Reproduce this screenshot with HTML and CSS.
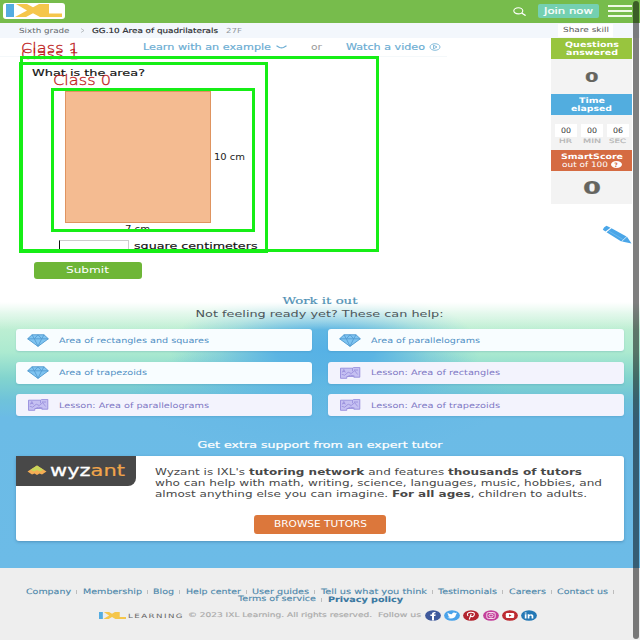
FILE: index.html
```html
<!DOCTYPE html>
<html lang="en">
<head>
<meta charset="utf-8">
<title>IXL | Area of quadrilaterals</title>
<link rel="stylesheet" href="styles.css">
</head>
<body>
<svg class="defs" width="0" height="0">
  <symbol id="gem" viewBox="0 0 22 13"><path d="M5 .8h12l4.300 4L11 12.400.7 4.800z" fill="#7fc4f1" stroke="#559dd2" stroke-width="1"/><path d="M.7 4.800h20.600M5 .8l2.300 4L11 .8l3.700 4L17 .8M7.300 4.800 11 12.200l3.700-7.400" fill="none" stroke="#559dd2" stroke-width=".9"/></symbol>
  <symbol id="lesson" viewBox="0 0 21 12"><path d="M1 1.200h12l1-.8h6.300v9.800h-6v-.8l-7 .1v1.800H1z" fill="#c5c0f2" stroke="#958cdb" stroke-width=".9"/><path d="m2.800 5.500 1.500-3 1.500 3M3.300 4.500h2M2.200 7.300l3 .9 3.500-3 3 1.300 3.500-2.800 3 3.800M13 1.200v3M8 9.500l3-1.300 4 .8M14.500 3h4" fill="none" stroke="#958cdb" stroke-width=".8"/></symbol>
  <symbol id="ixl" viewBox="0 0 56 13"><path d="M0 0h8v13H0z" fill="#54ace1"/><path d="M10 0h11l6 3.300L33 0h10v9.500h13V13H34l-7-3.700L20 13H9l12-6.500z" fill="#f5c64b"/></symbol>
</svg>
<div class="page">
  <header class="top">
    <div class="logo"><svg width="56" height="13"><use href="#ixl"/></svg></div>
    <div class="topright">
      <svg class="search" width="13" height="9" viewBox="0 0 13 9"><ellipse cx="5.300" cy="3.800" rx="4.500" ry="3.100" fill="none" stroke="#fff" stroke-width="1.100"/><path d="m8.600 6 4 2.500" stroke="#fff" stroke-width="1.400"/></svg>
      <a class="join"><span data-w="49">Join now</span></a>
      <div class="burger"><i></i><i></i><i></i></div>
    </div>
  </header>
  <nav class="crumbs">
    <span data-w="50.5">Sixth grade</span>
    <svg class="sep" width="5" height="5" viewBox="0 0 5 5"><path d="m1 .5 3 2-3 2" fill="none" stroke="#a4a9ac" stroke-width=".7"/></svg>
    <span class="skill" data-w="126">GG.10 Area of quadrilaterals</span>
    <span class="code" data-w="16">27F</span>
    <div class="share"><span data-w="46">Share skill</span></div>
  </nav>
  <main class="practice">
    <section class="question">
      <div class="help">
        <span data-w="128">Learn with an example</span>
        <svg class="chev" width="11" height="4" viewBox="0 0 11 4"><path d="m.5.8 3 1.700q2 .8 4 0l3-1.700" fill="none" stroke="#69acd2" stroke-width="1.200"/></svg>
        <span class="or" data-w="11">or</span>
        <span data-w="79">Watch a video</span>
        <svg class="play" width="12" height="8" viewBox="0 0 12 8"><ellipse cx="6" cy="4" rx="5" ry="3.300" fill="none" stroke="#69acd2" stroke-width=".8"/><path d="M4.500 2.200 8 4 4.500 5.800z" fill="none" stroke="#69acd2" stroke-width=".8"/></svg>
      </div>
      <h1><span data-w="113">What is the area?</span></h1>
      <div class="figure"><div class="shape"></div><span data-w="31">10 cm</span></div>
      <div class="base"><span data-w="25">7 cm</span></div>
      <div class="answer"><div class="field"></div><span data-w="123.5">square centimeters</span></div>
      <button class="submit"><span data-w="43">Submit</span></button>
    </section>
    <aside class="score">
      <div class="head green"><span data-w="54">Questions</span><span data-w="52">answered</span></div>
      <div class="box count"><span data-w="13.5">0</span></div>
      <div class="head blue"><span data-w="26">Time</span><span data-w="41">elapsed</span></div>
      <div class="box timer">
        <div><b><span data-w="10">00</span></b><small><span data-w="13">HR</span></small></div>
        <div><b><span data-w="10">00</span></b><small><span data-w="18">MIN</span></small></div>
        <div><b><span data-w="10">06</span></b><small><span data-w="17">SEC</span></small></div>
      </div>
      <div class="head orange"><span data-w="62">SmartScore</span><div class="outof"><span data-w="46">out of 100</span><em>?</em></div></div>
      <div class="box smart"><span data-w="18">0</span></div>
      <svg class="pencil" width="30" height="21" viewBox="0 0 30 21"><path d="M2 2.500 4.500.8 8.500 2.800 3.500 6.500.8 4.700z" fill="#4aa6e8"/><path d="m9.500 3.200 15 8.300-5.200 5L4.500 7.200z" fill="#4aa6e8"/><path d="m25 11.800 4.500 6.700-9.500-2z" fill="#4aa6e8"/><path d="m7 6.200 14 8.300" stroke="#81c4f1" stroke-width=".6"/></svg>
    </aside>
  </main>
  <section class="workout">
    <h2><span data-w="75">Work it out</span></h2>
    <h3><span data-w="248">Not feeling ready yet? These can help:</span></h3>
    <div class="cards">
      <a class="card"><svg width="22" height="13"><use href="#gem"/></svg><span data-w="150">Area of rectangles and squares</span></a>
      <a class="card"><svg width="22" height="13"><use href="#gem"/></svg><span data-w="109">Area of parallelograms</span></a>
      <a class="card"><svg width="22" height="13"><use href="#gem"/></svg><span data-w="88">Area of trapezoids</span></a>
      <a class="card lesson"><svg width="22" height="12"><use href="#lesson"/></svg><span data-w="129">Lesson: Area of rectangles</span></a>
      <a class="card lesson"><svg width="22" height="12"><use href="#lesson"/></svg><span data-w="150">Lesson: Area of parallelograms</span></a>
      <a class="card lesson"><svg width="22" height="12"><use href="#lesson"/></svg><span data-w="129">Lesson: Area of trapezoids</span></a>
    </div>
    <h4><span data-w="245">Get extra support from an expert tutor</span></h4>
    <div class="tutor">
      <div class="brand"><svg width="20" height="12" viewBox="0 0 20 12"><path d="M10 .5 19.500 6.500 15 9.500 12.500 8.500 10 10 7.500 8.500 5 9.500.5 6.500z" fill="#f5ae55"/><path d="m10 .5 6.500 4.200-3.500 1.800-3-1.500-3 1.500-3.500-1.800z" fill="#c9d65a"/></svg><span data-w="75">wyz<i>ant</i></span></div>
      <div class="pitch">
        <p><span data-w="427">Wyzant is IXL's <b>tutoring network</b> and features <b>thousands of tutors</b></span></p>
        <p><span data-w="447">who can help with math, writing, science, languages, music, hobbies, and</span></p>
        <p><span data-w="432">almost anything else you can imagine. <b>For all ages</b>, children to adults.</span></p>
      </div>
      <button class="browse"><span data-w="93">BROWSE TUTORS</span></button>
    </div>
  </section>
  <footer class="foot">
    <div class="links"><a><span data-w="45">Company</span></a><a><span data-w="59">Membership</span></a><a><span data-w="21">Blog</span></a><a><span data-w="55">Help center</span></a><a><span data-w="57">User guides</span></a><a><span data-w="106">Tell us what you think</span></a><a><span data-w="59">Testimonials</span></a><a><span data-w="37">Careers</span></a><a><span data-w="51">Contact us</span></a></div>
    <div class="links second"><a><span data-w="78">Terms of service</span></a><strong><span data-w="75">Privacy policy</span></strong></div>
    <div class="legal">
      <svg width="27" height="7" viewBox="0 0 56 13" preserveAspectRatio="none"><use href="#ixl" width="56" height="13"/></svg>
      <span class="learning" data-w="56">LEARNING</span>
      <span class="copy" data-w="184">© 2023 IXL Learning. All rights reserved.</span>
      <span class="follow" data-w="43">Follow us</span>
      <div class="social">
        <svg viewBox="0 0 16 11"><ellipse cx="8" cy="5.500" rx="7.900" ry="5.300" fill="#3f5a9c"/><path d="M7 10.500V6H5.400V4.500H7V3.600q0-2 3.500-1.600v1.300Q9 3.100 9 3.900v.6h1.700L10.400 6H9v4.500z" fill="#fff"/></svg>
        <svg viewBox="0 0 16 11"><ellipse cx="8" cy="5.500" rx="7.900" ry="5.300" fill="#4aa3ea"/><path d="M3.600 2.800q2 1.500 4.400 1.500.2-2 2-1.900 1 0 1.500.6l1.500-.3-.8.9.8.1-1 .8Q11.500 8.500 6.800 8.600q-2 0-3.400-.8 1.800 0 2.600-.7-1.300-.1-1.700-1h.8Q3.700 5.700 3.700 4.700l.7.1q-1.200-.8-.8-2z" fill="#fff"/></svg>
        <svg viewBox="0 0 16 11"><ellipse cx="8" cy="5.500" rx="7.900" ry="5.300" fill="#b3242f"/><path d="M6.200 9.500 8.200 4M5 6Q3 3 7.500 2.200 12 2 11.300 4.700 10.300 7.500 7.600 6.300" fill="none" stroke="#fff" stroke-width="1.100"/></svg>
        <svg viewBox="0 0 16 11"><ellipse cx="8" cy="5.500" rx="7.900" ry="5.300" fill="#c43f9b"/><rect x="3.800" y="2.500" width="8.400" height="6" rx="1.600" fill="none" stroke="#fff" stroke-width=".8"/><ellipse cx="8" cy="5.500" rx="2.100" ry="1.500" fill="none" stroke="#fff" stroke-width=".8"/><circle cx="10.600" cy="3.700" r=".4" fill="#fff"/></svg>
        <svg viewBox="0 0 16 11"><ellipse cx="8" cy="5.500" rx="7.900" ry="5.300" fill="#bd2b31"/><rect x="3.800" y="3" width="8.400" height="5" rx="1.300" fill="#fff"/><path d="m7 4.300 2.600 1.200L7 6.700z" fill="#bd2b31"/></svg>
        <svg viewBox="0 0 16 11"><ellipse cx="8" cy="5.500" rx="7.900" ry="5.300" fill="#2478b5"/><path d="M3.800 4.300h1.700v4.200H3.800zM3.800 2.500h1.700v1.100H3.800zM6.700 4.300h1.600v.5q2.800-1.200 4 .7v3h-1.700V6.200q-.8-1.200-2.200 0v2.300H6.700z" fill="#fff"/></svg>
      </div>
    </div>
  </footer>
  <div class="tag t1"><span data-w="58">Class 1</span></div>
  <div class="tag t2"><span data-w="58">Class 1</span></div>
  <div class="tag t3"><span data-w="58">Class 0</span></div>
  <div class="bound b1"></div>
  <div class="bound b2"></div>
  <div class="bound b3"></div>
  <div class="scrollbar"></div>
</div>
<script src="fit.js"></script>
</body>
</html>
```
FILE: styles.css
```css
* { box-sizing: border-box; }
body { margin: 0; background: #fff; font-family: "DejaVu Sans", sans-serif; font-size: 8px; color: #222; }
.defs { position: absolute; }
.page { position: relative; width: 640px; height: 640px; overflow: hidden; display: flex; flex-direction: column; }
svg { display: block; flex: none; }
h1, h2, h3, h4, p { margin: 0; font-weight: normal; }
button { border: 0; padding: 0; font-family: inherit; }
[data-w] { display: inline-block; white-space: nowrap; text-align: left; transform-origin: 0 50%; flex: none; }

.top { height: 23px; flex: none; background: #77bc4c; display: flex; justify-content: space-between; }
.logo { width: 62px; height: 16px; margin: 3px 0 0 3px; background: #fff; border-radius: 3px; padding: 1px 3px; }
.topright { display: flex; align-items: flex-start; padding-right: 8px; }
.search { margin: 7px 12px 0 0; }
.join { width: 61px; height: 14px; margin: 4px 9px 0 0; background: #74d0b1; color: #fff; border-radius: 2px; font-size: 9px; line-height: 15px; padding-left: 6px; -webkit-text-stroke: .2px #fff; }
.burger { width: 24px; padding-top: 5px; display: flex; flex-direction: column; gap: 3px; }
.burger i { height: 2px; background: #effae6; }

.crumbs { height: 15px; flex: none; background: #f3f7fc; display: flex; align-items: center; padding-left: 18.5px; font-size: 7px; color: #62676b; }
.sep { margin: 0 7px 0 11px; }
.skill { color: #26292c; -webkit-text-stroke: .15px #26292c; }
.code { padding-left: 0; color: #92989c; }
.share { margin-left: 316px; width: 55px; height: 13px; background: #fff; padding-left: 5px; line-height: 13px; color: #555; }
.code { margin-left: 8px; }

.practice { height: 252px; flex: none; display: flex; justify-content: space-between; }
.question { width: 400px; }
.help { display: flex; align-items: center; height: 19px; width: 447px; padding-left: 143px; font-size: 8.5px; color: #69acd2; border-bottom: 1px solid #f4f8fa; -webkit-text-stroke: .15px #69acd2; }
.chev { margin: 0 24px 0 5px; }
.or { color: #999; -webkit-text-stroke: 0; }
.play { margin-left: 4px; }
h1 { padding: 9px 0 0 32px; font-size: 9px; line-height: 14px; color: #111; height: 33.5px; -webkit-text-stroke: .15px #111; }
.figure { display: flex; align-items: center; gap: 3px; padding-left: 65px; color: #222; font-size: 8.5px; }
.shape { width: 146px; height: 132px; background: #f4bb91; border: 1px solid #df9460; }
.base { padding-left: 125px; font-size: 8.5px; line-height: 12px; height: 17px; }
.answer { display: flex; padding-left: 59px; font-size: 9px; line-height: 13px; height: 22.5px; color: #111; -webkit-text-stroke: .15px #111; }
.field { width: 70px; height: 11px; margin-right: 4.5px; border: 1px solid #ccc; border-left-color: #111; }
.submit { display: block; margin: 0 0 0 33.5px; width: 108px; height: 17px; border-radius: 3px; background: #6eb637; color: #fff; font-size: 9px; line-height: 17px; }

.score { width: 81px; margin-right: 8px; display: flex; flex-direction: column; align-items: stretch; }
.head { height: 21px; display: flex; flex-direction: column; align-items: center; justify-content: center; color: #fff; font-size: 7.5px; font-weight: bold; line-height: 7.5px; }
.green { background: #98c53e; }
.blue { background: #52addf; }
.orange { background: #d56b42; }
.outof { display: flex; align-items: center; gap: 3px; font-weight: normal; }
.outof em { width: 11px; height: 7px; border-radius: 50%; background: #fff; color: #d56b42; font: bold 6px/7px "DejaVu Sans", sans-serif; text-align: center; }
.box { background: #f3f3f3; display: flex; justify-content: center; color: #65655f; font-weight: bold; }
.count { height: 35px; align-items: center; font-size: 14px; -webkit-text-stroke: .2px #65655f; }
.smart { height: 33px; align-items: center; font-size: 18px; -webkit-text-stroke: .2px #65655f; }
.timer { height: 35px; padding-top: 9px; gap: 4px; font-weight: normal; }
.timer div { width: 22px; text-align: center; }
.timer b { display: block; height: 13px; background: #fff; font-weight: normal; font-size: 7.5px; line-height: 13px; color: #333; }
.timer small { display: block; color: #b4b4b4; font-size: 6px; line-height: 8px; -webkit-text-stroke: .15px #b4b4b4; }
.pencil { margin: 21px 0 0 51px; }

.workout { height: 278px; flex: none; display: flex; flex-direction: column; align-items: center; padding-top: 3px;
  background:
    linear-gradient(#fff 0, #fff 12px, rgba(255,255,255,.5) 23px, rgba(255,255,255,0) 40px),
    radial-gradient(ellipse 155px 64px at 325px 60px, #56b1e5 0, rgba(86,177,229,.9) 32%, rgba(90,180,228,.35) 68%, rgba(108,187,230,0) 100%),
    radial-gradient(ellipse 190px 60px at 320px 105px, rgba(99,183,230,.75) 20%, rgba(99,183,230,0) 100%),
    linear-gradient(#dcf6e7 0, #bfefd3 35px, #acead0 62px, #82d4ce 88px, #6fc3da 110px, #6bbbe6 128px, #6cbbe7 100%); }
h2 { font-family: "DejaVu Serif", serif; font-size: 10px; line-height: 15px; color: #4f91b5; transform: translateX(-.5px); -webkit-text-stroke: .2px #4f91b5; }
h3 { font-size: 9.5px; line-height: 12px; color: #4c565a; transform: translateX(-.5px); }
.cards { display: grid; grid-template-columns: 296px 296px; grid-auto-rows: 22px; gap: 10.5px 16px; margin-top: 9px; }
.card { background: #f8fdff; border-radius: 3px; display: flex; align-items: center; gap: 10px; padding-left: 11px; font-size: 7.5px; color: #4f8fc4; box-shadow: 0 1px 2px rgba(40,110,150,.2); }
.lesson { background: #f3f3fd; color: #7e77c4; }
h4 { font-size: 9px; line-height: 14px; color: #fff; margin: 21.5px 0 4.5px; transform: translateX(-.5px); -webkit-text-stroke: .2px #fff; }
.tutor { width: 608px; height: 85px; flex: none; background: #fff; border-radius: 3px; display: grid; grid-template-columns: 120px 1fr; grid-template-rows: 59px 19px; box-shadow: 0 1px 3px rgba(30,70,110,.35); }
.brand { width: 120px; height: 30px; background: #484848; border-radius: 0 0 8px 0; display: flex; align-items: center; gap: 3px; padding-left: 11px; color: #fff; font: 16px/20px "DejaVu Sans", sans-serif; -webkit-text-stroke: .3px currentColor; }
.brand span { margin-top: -1px; }
.brand i { font-style: normal; color: #f0a54b; -webkit-text-stroke: .2px #f0a54b; }
.pitch { padding: 11px 0 0 19px; font-size: 9px; line-height: 11.2px; color: #484848; }
.pitch p { height: 11.2px; }
.browse { grid-column: 1 / 3; justify-self: center; width: 132px; border-radius: 3px; background: #dc773b; color: #fff; font-size: 8px; line-height: 19px; }

.foot { flex: 1; background: #eee; padding-top: 20px; color: #4b86aa; font-size: 7.5px; }
.links { display: flex; justify-content: flex-start; padding-left: 26px; height: 7.5px; line-height: 8px; -webkit-text-stroke: .1px currentColor; }
.links a { display: flex; align-items: center; }
.links a::after { content: ""; width: 1px; height: 4px; margin: 1px 5.25px 0; background: #bdbdbd; }
.second { padding-left: 238px; }
.second strong { color: #3978a1; }
.legal { display: flex; align-items: center; padding-left: 98.5px; margin-top: 6px; height: 12px; font-size: 6.5px; color: #aaa; }
.learning { margin-left: 2.5px; color: #666; letter-spacing: 1px; font-size: 6px; }
.copy { margin-left: 4px; -webkit-text-stroke: .15px #aaa; }
.follow { margin-left: 6px; -webkit-text-stroke: .15px #aaa; }
.social { display: flex; gap: 3.2px; }
.social svg { width: 16px; height: 11px; }

.tag { position: absolute; color: #c01f1f; font-family: "DejaVu Sans", sans-serif; font-weight: 200; font-size: 14.5px; line-height: 16px; -webkit-text-stroke: .3px #c01f1f; }
.t1 { left: 21px; top: 40px; }
.t2 { left: 21px; top: 46px; }
.t3 { left: 53px; top: 72px; }
.bound { position: absolute; border: 3px solid #16ee16; }
.b1 { left: 20px; top: 56px; width: 359px; height: 196px; }
.b2 { left: 19px; top: 62px; width: 249px; height: 191px; border-left-width: 4px; border-bottom-width: 4px; }
.b3 { left: 51px; top: 88px; width: 204px; height: 144px; }
.scrollbar { position: absolute; left: 632.5px; top: 1px; width: 6px; height: 638px; border-radius: 3px; background: rgba(0,0,0,.5); }
```
FILE: fit.js
```js
// Stretch each label horizontally to the width given in its data-w attribute.
document.querySelectorAll('[data-w]').forEach(function (el) {
  var target = parseFloat(el.dataset.w);
  var natural = el.getBoundingClientRect().width;
  el.style.width = natural + 'px';
  el.style.marginRight = (target - natural) + 'px';
  el.style.transform = 'scaleX(' + target / natural + ')';
});
// Labels that need space after them keep it on top of the fitted width.
document.querySelectorAll('.or, .follow').forEach(function (el) {
  var extra = el.classList.contains('or') ? 24 : 4;
  el.style.marginRight = parseFloat(el.style.marginRight) + extra + 'px';
});
```
